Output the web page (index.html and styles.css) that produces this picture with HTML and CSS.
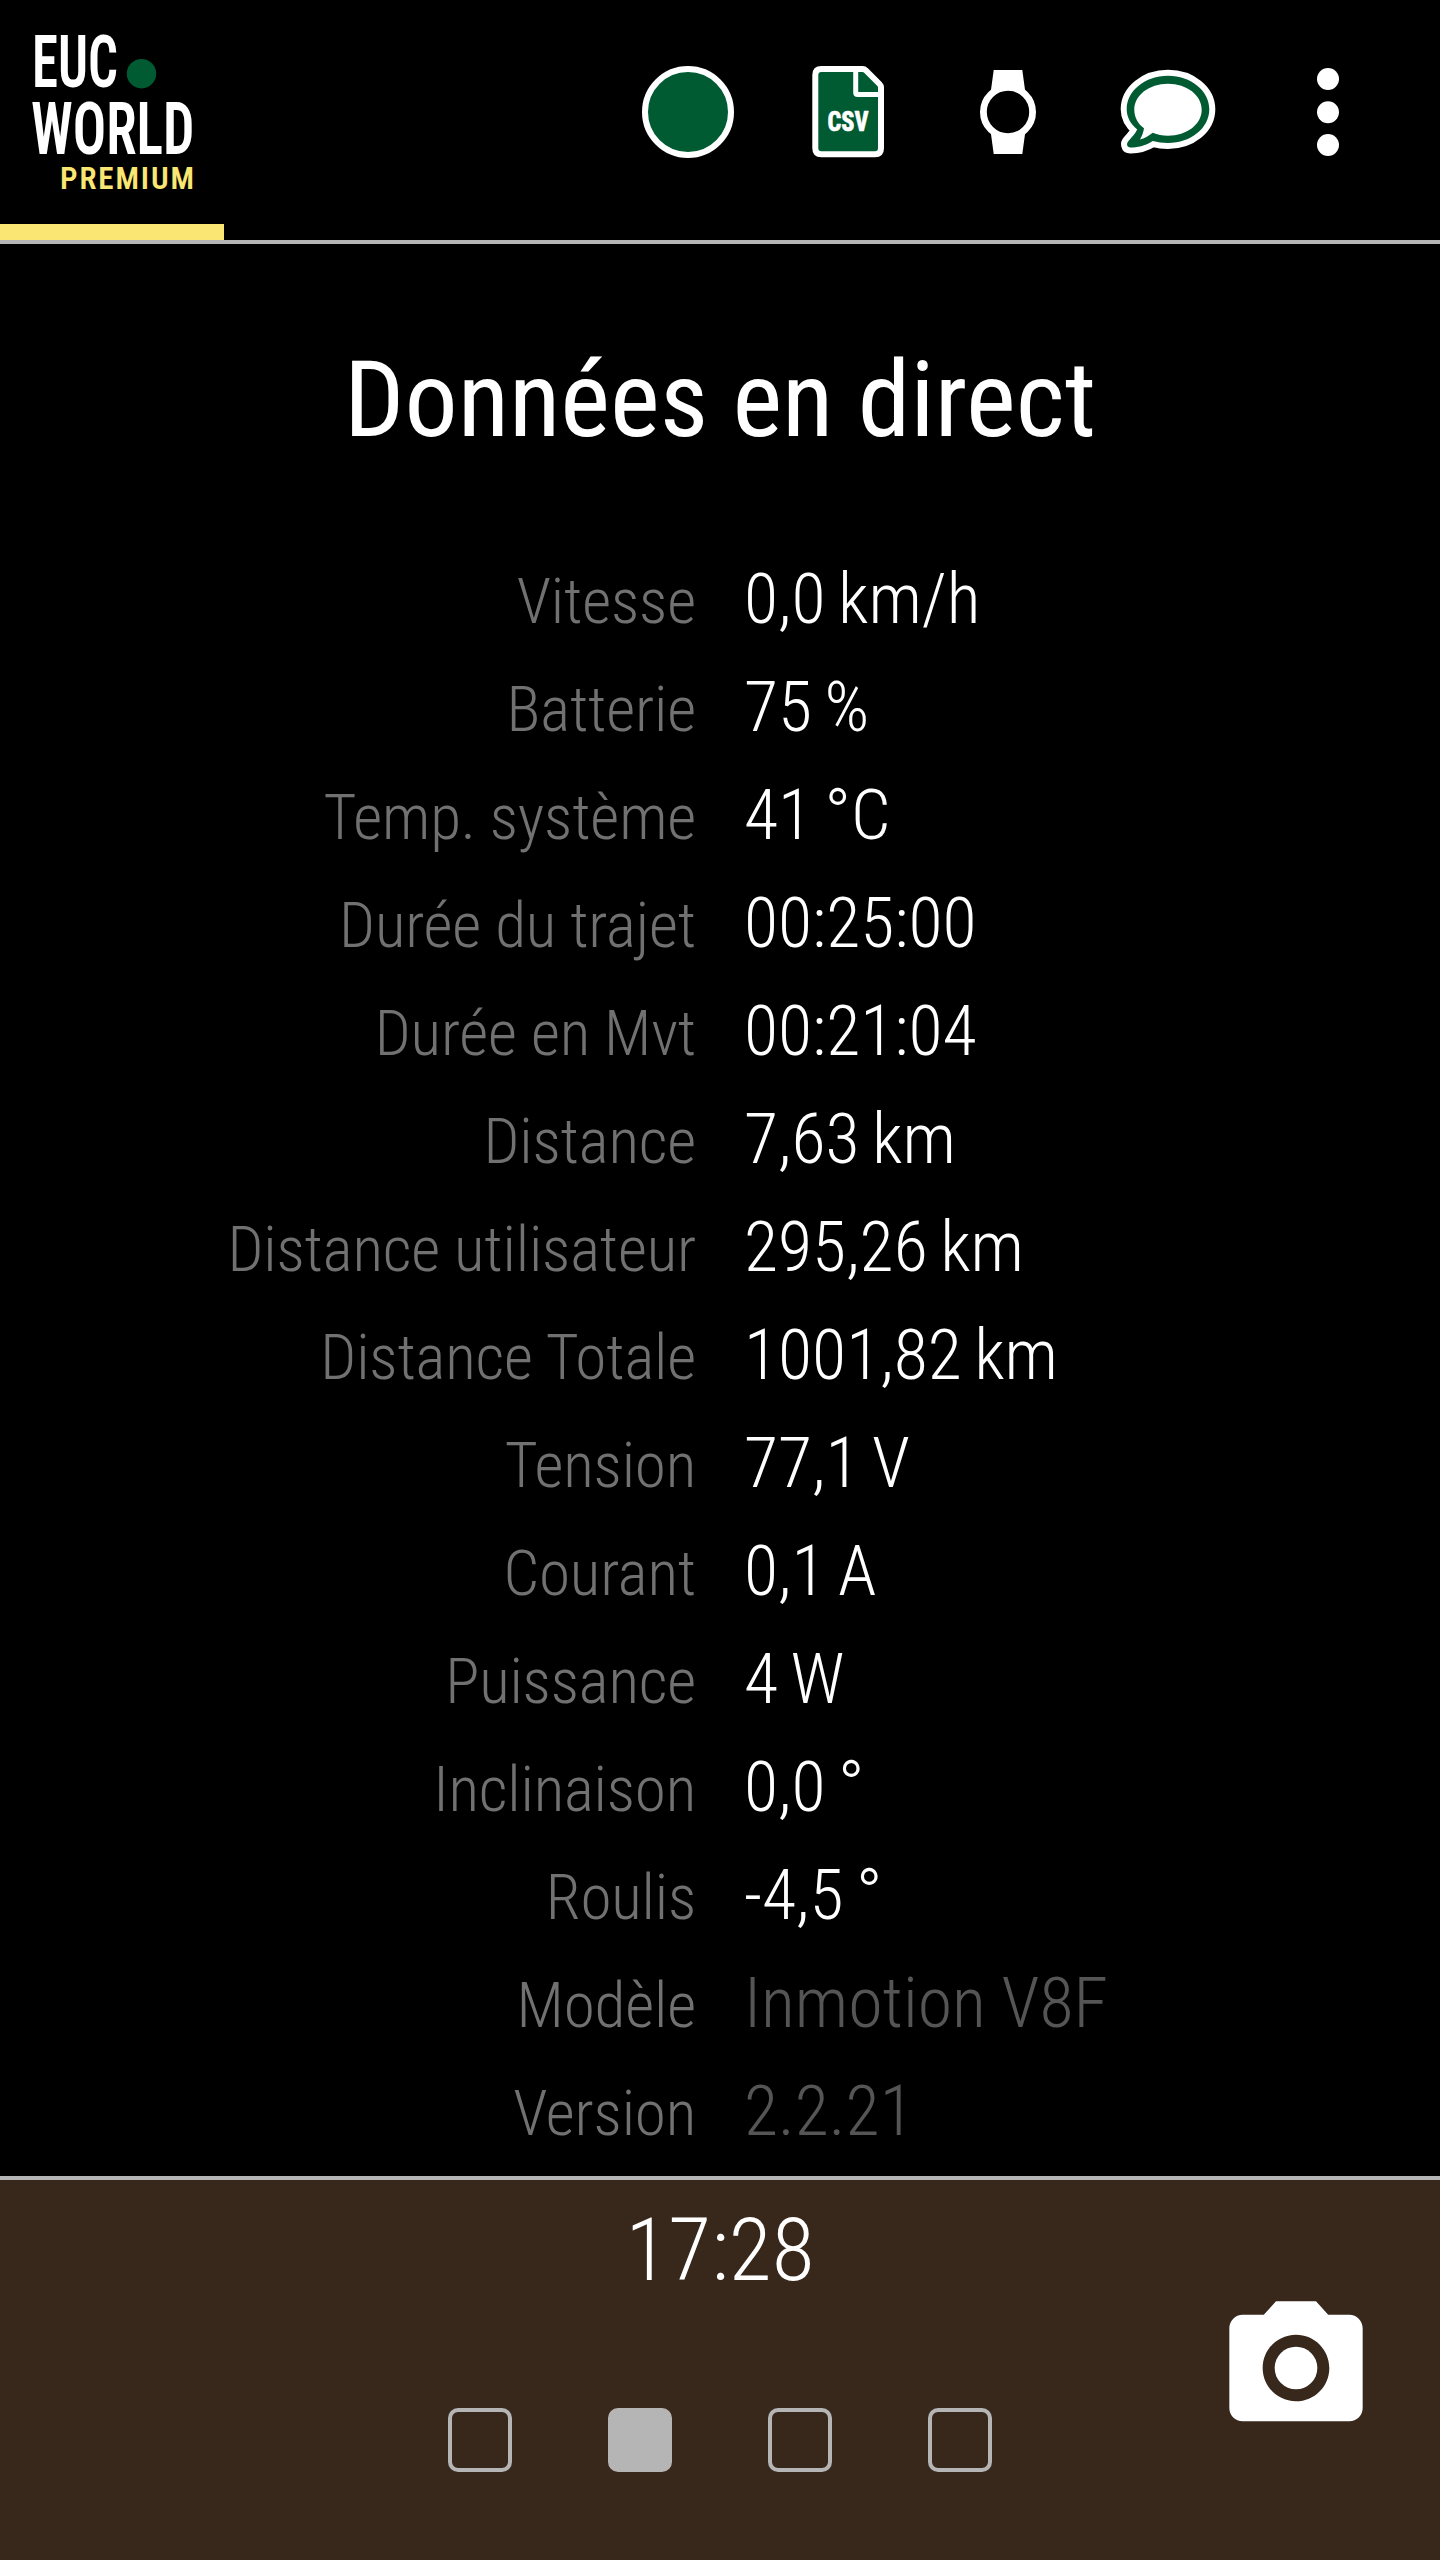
FILE: index.html
```html
<!DOCTYPE html>
<html lang="fr">
<head>
  <meta charset="UTF-8">
  <meta name="viewport" content="width=device-width, initial-scale=1.0">
  <title>EUC World</title>
  <link rel="stylesheet" href="styles.css">
</head>
<body>
  <header class="topbar">
    <div class="brand">
      <svg class="logo" viewBox="0 0 224 224">
        <text class="logo-name" x="32" y="86.5" textLength="86" lengthAdjust="spacingAndGlyphs">EUC</text>
        <circle cx="141.5" cy="73.7" r="14.7" fill="#005a32"/>
        <text class="logo-name" x="31" y="154" textLength="163.5" lengthAdjust="spacingAndGlyphs">WORLD</text>
        <text class="logo-tier" x="60" y="188.7" textLength="134" lengthAdjust="spacing">PREMIUM</text>
      </svg>
      <div class="brand-line"></div>
    </div>
    <nav class="actions">
      <svg class="icon" viewBox="0 0 160 160">
        <circle cx="80" cy="80" r="43" fill="#005a32" stroke="#fff" stroke-width="6"/>
      </svg>
      <svg class="icon" viewBox="0 0 160 160">
        <path d="M53.3 37H94.5Q96.5 37 98 38.5L111.5 52Q113 53.5 113 55.5V116.3Q113 122.3 107 122.3H53.3Q47.3 122.3 47.3 116.3V43Q47.3 37 53.3 37Z" fill="#005a32" stroke="#fff" stroke-width="6"/>
        <path d="M87.7 38V60.5Q87.7 62.5 89.7 62.5H112" fill="none" stroke="#fff" stroke-width="5"/>
        <text class="csv" x="59.5" y="98.8" textLength="41" lengthAdjust="spacingAndGlyphs">CSV</text>
      </svg>
      <svg class="icon" viewBox="0 0 160 160">
        <path d="M65.7 38H94.3L97 58V102L94.3 122H65.7L63 102V58Z" fill="#fff"/>
        <circle cx="80" cy="80" r="24.6" fill="#000" stroke="#fff" stroke-width="6.8"/>
      </svg>
      <svg class="icon" viewBox="0 0 160 160">
        <path d="M80 43.8C103 43.8 121.3 59 121.3 77.3C121.3 96 103 111 80 111C74.5 111 69.5 110.2 64.7 109C57 114 49 115.5 42.5 115.5C38.5 115.5 38.2 111.5 40.5 109C44.5 104.5 47.5 101 49.2 97.5C42.5 92 38.7 85 38.7 77.3C38.7 59 57 43.8 80 43.8Z" fill="none" stroke="#fff" stroke-width="12" stroke-linejoin="round"/>
        <path d="M80 43.8C103 43.8 121.3 59 121.3 77.3C121.3 96 103 111 80 111C74.5 111 69.5 110.2 64.7 109C57 114 49 115.5 42.5 115.5C38.5 115.5 38.2 111.5 40.5 109C44.5 104.5 47.5 101 49.2 97.5C42.5 92 38.7 85 38.7 77.3C38.7 59 57 43.8 80 43.8Z" fill="#005a32"/>
        <path d="M80 51.7C99 51.7 113.7 63.3 113.7 77.7S99 103.7 80 103.7C74.5 103.7 69.5 102.7 64.7 100.7C60.5 104 56.5 106.3 52 107.5C54 104 55.5 100 56 96.3C50 92 46.3 85 46.3 77.7C46.3 63.3 61 51.7 80 51.7Z" fill="#fff"/>
      </svg>
      <svg class="icon" viewBox="0 0 160 160">
        <g fill="#fff">
          <circle cx="80" cy="47" r="11"/>
          <circle cx="80" cy="80.2" r="11"/>
          <circle cx="80" cy="113" r="11"/>
        </g>
      </svg>
    </nav>
  </header>

  <main class="live">
    <h1>Données en direct</h1>
    <dl class="data">
      <dt>Vitesse</dt><dd>0,0 km/h</dd>
      <dt>Batterie</dt><dd>75 %</dd>
      <dt>Temp. système</dt><dd>41 °C</dd>
      <dt>Durée du trajet</dt><dd>00:25:00</dd>
      <dt>Durée en Mvt</dt><dd>00:21:04</dd>
      <dt>Distance</dt><dd>7,63 km</dd>
      <dt>Distance utilisateur</dt><dd>295,26 km</dd>
      <dt>Distance Totale</dt><dd>1001,82 km</dd>
      <dt>Tension</dt><dd>77,1 V</dd>
      <dt>Courant</dt><dd>0,1 A</dd>
      <dt>Puissance</dt><dd>4 W</dd>
      <dt>Inclinaison</dt><dd>0,0 °</dd>
      <dt>Roulis</dt><dd>-4,5 °</dd>
      <dt>Modèle</dt><dd class="dim">Inmotion V8F</dd>
      <dt>Version</dt><dd class="dim">2.2.21</dd>
    </dl>
  </main>

  <footer class="bottombar">
    <div class="clock">17:28</div>
    <div class="pages">
      <span class="page"></span>
      <span class="page active"></span>
      <span class="page"></span>
      <span class="page"></span>
    </div>
    <svg class="camera" viewBox="0 0 24 24" fill="#fff">
      <circle cx="12" cy="12" r="3.2"/>
      <path d="M9 2L7.17 4H4c-1.1 0-2 .9-2 2v12c0 1.1.9 2 2 2h16c1.1 0 2-.9 2-2V6c0-1.1-.9-2-2-2h-3.17L15 2H9zm3 15c-2.76 0-5-2.24-5-5s2.24-5 5-5 5 2.24 5 5-2.24 5-5 5z"/>
    </svg>
  </footer>
</body>
</html>
```
FILE: styles.css
```css
* {
  box-sizing: border-box;
}

body {
  margin: 0;
  height: 2560px;
  display: flex;
  flex-direction: column;
  background: #000;
  color: #fff;
  font-family: "Roboto Condensed", Roboto, sans-serif;
  font-stretch: 75%;
  font-weight: 300;
  overflow: hidden;
}

/* top bar */
.topbar {
  display: flex;
  justify-content: space-between;
  height: 244px;
  border-bottom: 4px solid #b5b5b5;
}

.brand {
  width: 224px;
}

.logo {
  display: block;
  width: 224px;
  height: 224px;
}

.logo-name {
  font-size: 72.5px;
  font-weight: 650;
  fill: #fff;
}

.logo-tier {
  font-size: 31px;
  font-weight: 600;
  fill: #fae672;
}

.brand-line {
  height: 16px;
  background: #fae672;
}

.actions {
  display: flex;
  padding: 32px 32px 0 0;
}

.icon {
  width: 160px;
  height: 160px;
}

.csv {
  font-size: 27px;
  font-weight: 800;
  fill: #fff;
  stroke: #fff;
  stroke-width: 0.6px;
  stroke-linejoin: round;
}

/* live data */
.live {
  flex: 1;
}

h1 {
  margin: 0;
  padding-top: 94px;
  height: 301px;
  font-size: 106px;
  line-height: 125px;
  font-weight: 400;
  text-align: center;
}

.data {
  margin: 0;
  display: grid;
  grid-template-columns: 696px 1fr;
  column-gap: 48px;
  grid-auto-rows: 108px;
  align-items: baseline;
}

dt {
  font-size: 63.3px;
  line-height: 108px;
  letter-spacing: -0.2px;
  text-align: right;
  color: #717171;
}

dd {
  margin: 0;
  font-size: 70px;
  line-height: 108px;
  word-spacing: -3.3px;
}

.dim {
  color: #555;
  word-spacing: 0;
}

/* bottom bar */
.bottombar {
  position: relative;
  height: 384px;
  border-top: 4px solid #b5b5b5;
  background: #38271b;
  text-align: center;
}

.clock {
  padding-top: 18px;
  height: 228px;
  font-size: 88px;
  line-height: 104px;
}

.pages {
  display: flex;
  justify-content: center;
  gap: 96px;
}

.page {
  width: 64px;
  height: 64px;
  border: 4px solid #b5b5b5;
  border-radius: 10px;
}

.page.active {
  background: #b5b5b5;
}

.camera {
  position: absolute;
  top: 108px;
  right: 64px;
  width: 160px;
  height: 160px;
}
```
